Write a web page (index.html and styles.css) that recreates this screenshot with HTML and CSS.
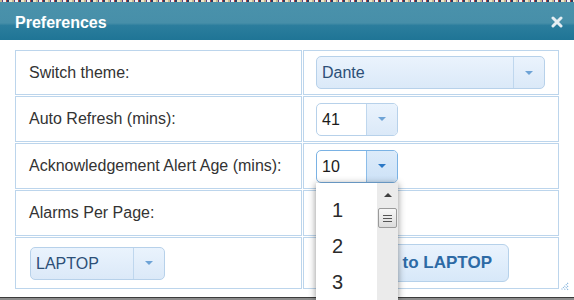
FILE: index.html
```html
<!DOCTYPE html>
<html lang="en">
<head>
    <meta charset="UTF-8">
    <meta name="viewport" content="width=device-width, initial-scale=1.0">
    <title>Preferences</title>
    <link rel="stylesheet" href="styles.css">
</head>
<body>
    <!-- page text peeking out above the dialog -->
    <div class="backdrop"></div>

    <div class="dialog">
        <div class="titlebar">
            <span class="title">Preferences</span>
            <span class="close">
                <svg width="12" height="12" viewBox="0 0 12 12"><path d="M2 2 L10 10 M10 2 L2 10" stroke="#e6eef2" stroke-width="3" stroke-linecap="round"/></svg>
            </span>
        </div>

        <div class="content">
            <table class="prefs">
                <tr class="row-1">
                    <td class="label">Switch theme:</td>
                    <td class="field">
                        <span class="combo combo-wide"><span class="value">Dante</span><span class="arrow"><i></i></span></span>
                    </td>
                </tr>
                <tr class="row-2">
                    <td class="label">Auto Refresh (mins):</td>
                    <td class="field">
                        <span class="combo combo-num"><span class="value">41</span><span class="arrow"><i></i></span></span>
                    </td>
                </tr>
                <tr class="row-3">
                    <td class="label">Acknowledgement Alert Age (mins):</td>
                    <td class="field">
                        <span class="combo combo-num focused"><span class="value">10</span><span class="arrow"><i></i></span></span>
                    </td>
                </tr>
                <tr class="row-4">
                    <td class="label">Alarms Per Page:</td>
                    <td class="field"></td>
                </tr>
                <tr class="row-5">
                    <td class="label">
                        <span class="combo combo-device"><span class="value">LAPTOP</span><span class="arrow"><i></i></span></span>
                    </td>
                    <td class="field">
                        <button class="switch-btn">Switch to LAPTOP</button>
                    </td>
                </tr>
            </table>

            <!-- resize handle -->
            <svg class="grip" width="9" height="9" viewBox="0 0 9 9">
                <path d="M8 1 L1 8 M8 4 L4 8 M8 7 L7 8" stroke="#7fb0dc" stroke-width="1.2" stroke-dasharray="1 1"/>
            </svg>
        </div>
    </div>

    <!-- open list of the "Acknowledgement Alert Age" combo -->
    <div class="listbox">
        <ul>
            <li>1</li>
            <li>2</li>
            <li>3</li>
        </ul>
        <div class="scrollbar">
            <span class="up"></span>
            <span class="thumb"><i></i><i></i><i></i></span>
        </div>
    </div>
</body>
</html>
```

FILE: styles.css
```css
/* Global */
body {
    margin: 0;
    width: 574px;
    height: 300px;
    overflow: hidden;
    position: relative;
    font-family: "Liberation Sans", Arial, sans-serif;
    background-color: #8c8c8c;
}

.backdrop {
    height: 2px;
    background: repeating-linear-gradient(90deg, #c9b98e 0 2px, #5d3f86 2px 3px, #f4f4f4 3px 6px, #b8413a 6px 7px, #2f3c64 7px 9px, #efe6c8 9px 12px);
}

/* Dialog */
.dialog {
    background-color: #fff;
    border-bottom: 1px solid #3b3b3b;
}

.titlebar {
    height: 38px;
    display: flex;
    align-items: center;
    justify-content: space-between;
    padding: 0 11px 0 15px;
    background: linear-gradient(#4a92ab 0%, #478fa9 55%, #2b7d9d 62%, #1f7596 100%);
    color: #fff;
}

.title {
    font-size: 16px;
    font-weight: bold;
    padding-top: 4px;
}

.close {
    display: flex;
    margin-top: 2px;
}

.content {
    position: relative;
    padding: 9px 0 7px 14px;
}

/* Preferences table */
.prefs {
    width: 546px;
    table-layout: fixed;
    border-collapse: separate;
    border-spacing: 1px;
}

.prefs td {
    box-sizing: border-box;
    border: 1px solid #bcd5ec;
    padding: 0 12px;
    vertical-align: middle;
    font-size: 16px;
    color: #333;
}

.prefs td.label {
    width: 287px;
    padding-left: 13px;
}

.row-1 { height: 45px; }
.row-2, .row-3, .row-4 { height: 46px; }
.row-5 { height: 52px; }

/* Combo boxes */
.combo {
    display: inline-flex;
    box-sizing: border-box;
    height: 33px;
    border: 1px solid #b7d1ea;
    border-radius: 5px;
    overflow: hidden;
    vertical-align: middle;
    background: linear-gradient(#eaf3fd, #dbe9f8);
}

.combo .value {
    flex: 1;
    padding-left: 5px;
    line-height: 31px;
    font-size: 16px;
    color: #2c4f77;
}

.combo .arrow {
    width: 30px;
    border-left: 1px solid #bfd7ee;
    display: flex;
    align-items: center;
    justify-content: center;
}

.combo .arrow i {
    border-left: 4px solid transparent;
    border-right: 4px solid transparent;
    border-top: 4px solid #6ea3d6;
}

.combo-wide { width: 229px; }
.combo-device { width: 135px; margin-left: 1px; }

.combo-num {
    width: 82px;
    background: #fff;
}

.combo-num .value {
    color: #1b1b1b;
}

.combo-num .arrow {
    background: linear-gradient(#eaf3fd, #dbe9f8);
}

.combo.focused {
    border-color: #7ab2e4;
}

.combo.focused .arrow {
    border-left-color: #8cbde9;
    background: linear-gradient(#dcebfa, #cde2f7);
}

.combo.focused .arrow i {
    border-top-color: #2b78c6;
}

/* Button */
.switch-btn {
    box-sizing: border-box;
    width: 193px;
    height: 38px;
    padding: 0 16px;
    text-align: right;
    border: 1px solid #b6d1ea;
    border-radius: 6px;
    background: linear-gradient(#eaf3fd, #d7e8f9);
    font-family: "Liberation Sans", Arial, sans-serif;
    font-size: 17px;
    font-weight: bold;
    color: #2d6aa5;
    vertical-align: middle;
}

.grip {
    position: absolute;
    left: 560px;
    top: 242px;
}

/* Open drop-down list */
.listbox {
    position: absolute;
    left: 316px;
    top: 183px;
    width: 82px;
    height: 117px;
    background-color: #fff;
    box-shadow: 0 1px 7px rgba(0, 0, 0, 0.45);
}

.listbox ul {
    list-style: none;
    margin: 0;
    padding: 9px 0 0 16px;
}

.listbox li {
    height: 36px;
    line-height: 36px;
    font-size: 20px;
    color: #2a2a2a;
}

.scrollbar {
    position: absolute;
    top: 0;
    right: 0;
    bottom: 0;
    width: 21px;
    background-color: #ebebeb;
}

.scrollbar .up {
    position: absolute;
    left: 7px;
    top: 10px;
    border-left: 4px solid transparent;
    border-right: 4px solid transparent;
    border-bottom: 4px solid #3f3f3f;
}

.scrollbar .thumb {
    position: absolute;
    left: 1px;
    top: 25px;
    width: 17px;
    height: 18px;
    border: 1px solid #9a9a9a;
    border-radius: 2px;
    background: linear-gradient(#f7f7f7, #dcdcdc);
    display: flex;
    flex-direction: column;
    justify-content: center;
    align-items: center;
    gap: 2px;
}

.scrollbar .thumb i {
    width: 9px;
    height: 1px;
    background-color: #555;
}
```
